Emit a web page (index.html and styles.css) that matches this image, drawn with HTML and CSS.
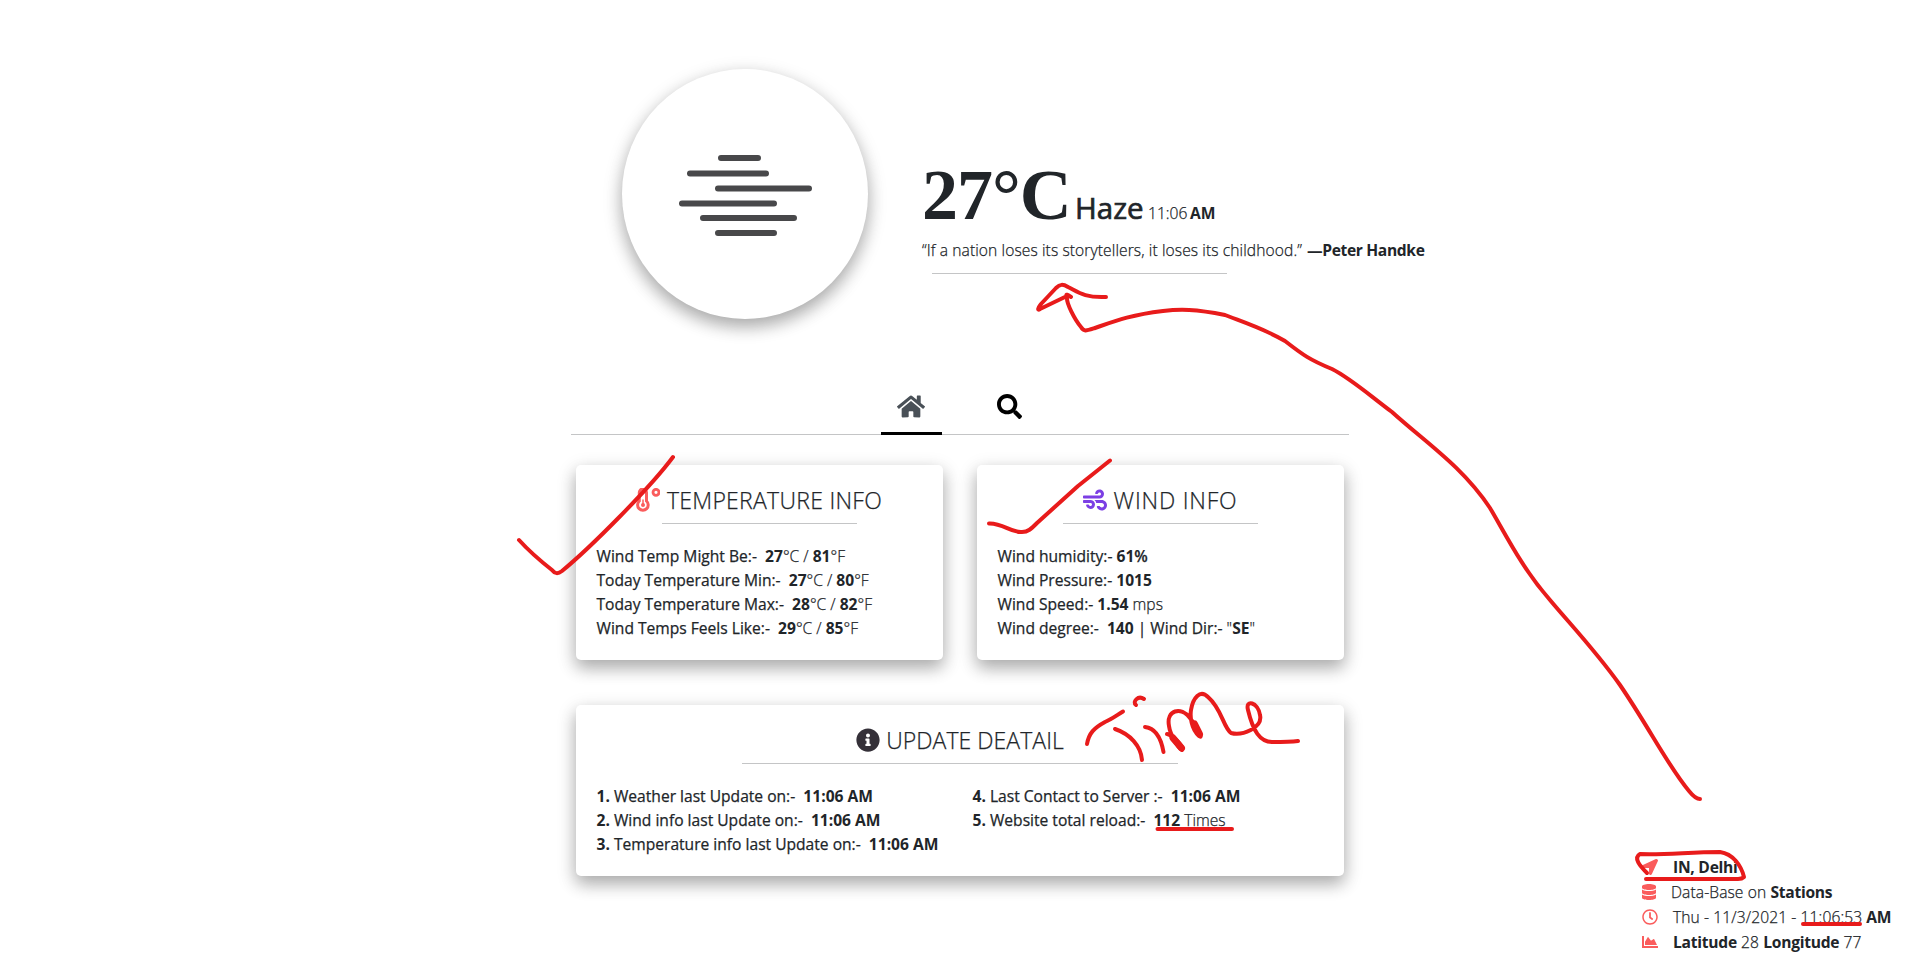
FILE: index.html
```html
<!DOCTYPE html>
<html lang="en">
<head>
<meta charset="utf-8">
<title>Weather</title>
<link rel="stylesheet" href="styles.css">
</head>
<body>
<div class="page">
  <main class="main">
    <header class="hero">
      <div class="disc">
        <svg class="haze" viewBox="0 0 134 84" fill="none" stroke="#48484a" stroke-width="6" stroke-linecap="round">
          <path d="M43 5H80M12 20.500H88M40 35.500H131M4 50.500H96M25 65H116M40 80H96"/>
        </svg>
      </div>
      <div class="now">
        <div class="reading"><span class="degrees">27°C</span><span class="sky">Haze</span><span class="clock">11:06</span><b class="ampm">AM</b></div>
        <p class="quote"><span class="words">“If a nation loses its storytellers, it loses its childhood.”</span><b class="author">—Peter Handke</b></p>
        <hr class="rule rule-quote">
      </div>
    </header>
    <nav class="tabs">
      <a class="tab active"><svg width="28" height="25" viewBox="0 0 576 512" fill="#495057"><path d="M280.37 148.26L96 300.11V464a16 16 0 0 0 16 16l112.06-.29a16 16 0 0 0 15.92-16V368a16 16 0 0 1 16-16h64a16 16 0 0 1 16 16v95.64a16 16 0 0 0 16 16.05L464 480a16 16 0 0 0 16-16V300L295.67 148.26a12.19 12.19 0 0 0-15.3 0zM571.6 251.47L488 182.56V44.05a12 12 0 0 0-12-12h-56a12 12 0 0 0-12 12v72.61L318.47 43a48 48 0 0 0-61 0L4.34 251.47a12 12 0 0 0-1.6 16.9l25.5 31A12 12 0 0 0 45.150 301l235.220-193.740a12.190 12.190 0 0 1 15.300 0L530.900 301a12 12 0 0 0 16.900-1.600l25.500-31a12 12 0 0 0-1.700-16.930z"/></svg></a>
      <a class="tab"><svg width="25" height="25" viewBox="0 0 512 512" fill="#000"><path d="M505 442.700L405.300 343c-4.500-4.500-10.600-7-17-7H372c27.600-35.300 44-79.700 44-128C416 93.100 322.900 0 208 0S0 93.100 0 208s93.100 208 208 208c48.300 0 92.700-16.400 128-44v16.300c0 6.400 2.500 12.500 7 17l99.700 99.700c9.400 9.400 24.600 9.400 33.900 0l28.300-28.300c9.400-9.400 9.400-24.600.1-34zM208 336c-70.700 0-128-57.200-128-128 0-70.700 57.200-128 128-128 70.700 0 128 57.200 128 128 0 70.700-57.200 128-128 128z"/></svg></a>
    </nav>
    <section class="cards">
      <article class="card">
        <h4 class="title"><svg class="ico" viewBox="0 0 24 24" fill="none" stroke="#fa5c5c"><path stroke-width="3" d="M3.300 13V4.500a3.600 3.600 0 0 1 7.200 0V13a5.300 5.300 0 1 1-7.200 0z"/><circle cx="20" cy="4.300" r="3" stroke-width="2.800"/><circle cx="7" cy="17" r="2" fill="#fa5c5c" stroke="none"/><path stroke-width="1.500" d="M7 11.500V17"/></svg><span class="t1">TEMPERATURE INFO</span></h4>
        <hr class="rule">
        <ul class="rows">
          <li><span class="lb">Wind Temp Might Be:-</span>&nbsp; <b>27</b><i>°C / </i><b>81</b><i>°F</i></li>
          <li><span class="lb">Today Temperature Min:-</span>&nbsp; <b>27</b><i>°C / </i><b>80</b><i>°F</i></li>
          <li><span class="lb">Today Temperature Max:-</span>&nbsp; <b>28</b><i>°C / </i><b>82</b><i>°F</i></li>
          <li><span class="lb">Wind Temps Feels Like:-</span>&nbsp; <b>29</b><i>°C / </i><b>85</b><i>°F</i></li>
        </ul>
      </article>
      <article class="card">
        <h4 class="title"><svg class="ico" viewBox="0 0 512 512" fill="#7c3fe4"><path d="M156.700 256H16c-8.800 0-16 7.200-16 16v32c0 8.800 7.200 16 16 16h142.200c15.900 0 30.800 10.900 33.400 26.600 3.300 20-12.100 37.400-31.600 37.400-14.100 0-26.100-9.200-30.400-21.900-2.100-6.300-8.600-10.100-15.200-10.100H81.600c-9.800 0-17.700 8.800-15.900 18.400 8.600 44.100 47.600 77.600 94.200 77.600 57.100 0 102.700-50.100 95.200-108.600C249 291 205.400 256 156.700 256zM16 224h336c59.700 0 106.800-54.800 93.800-116.700-7.600-36.200-36.900-65.500-73.100-73.100-55.400-11.600-105.100 24.900-114.900 75.500-1.900 9.600 6.100 18.300 15.800 18.300h32.800c6.700 0 13.100-3.800 15.200-10.100C325.900 105.200 337.900 96 352 96c19.400 0 34.900 17.400 31.600 37.400-2.600 15.700-17.400 26.600-33.400 26.600H16c-8.800 0-16 7.200-16 16v32c0 8.800 7.200 16 16 16zm384 32H243.700c19.300 16.600 33.200 38.800 39.800 64H400c26.500 0 48 21.500 48 48s-21.500 48-48 48c-17.900 0-33.300-9.900-41.600-24.400-2.900-5-8.700-7.600-14.500-7.600h-33.800c-10.900 0-19 10.800-15.300 21.100 17.800 50.600 70.500 84.800 129.400 72.300 41.200-8.700 75.100-41.600 84.700-82.700C526 321.500 470.500 256 400 256z"/></svg><span class="t2">WIND INFO</span></h4>
        <hr class="rule">
        <ul class="rows">
          <li><span class="lb">Wind humidity:-</span> <b>61</b><span class="lb heavy">%</span></li>
          <li><span class="lb">Wind Pressure:-</span> <b>1015</b></li>
          <li><span class="lb">Wind Speed:-</span> <b>1.54</b> <i>mps</i></li>
          <li><span class="lb">Wind degree:-</span>&nbsp; <b>140</b> <span class="lb">| Wind Dir:-</span> <i>"</i><b>SE</b><i>"</i></li>
        </ul>
      </article>
      <article class="card wide">
        <h4 class="title"><svg class="ico" viewBox="0 0 512 512" fill="#343038"><path d="M256 8C119.043 8 8 119.083 8 256c0 136.997 111.043 248 248 248s248-111.003 248-248C504 119.083 392.957 8 256 8zm0 110c23.196 0 42 18.804 42 42s-18.804 42-42 42-42-18.804-42-42 18.804-42 42-42zm56 254c0 6.627-5.373 12-12 12h-88c-6.627 0-12-5.373-12-12v-24c0-6.627 5.373-12 12-12h12v-64h-12c-6.627 0-12-5.373-12-12v-24c0-6.627 5.373-12 12-12h64c6.627 0 12 5.373 12 12v100h12c6.627 0 12 5.373 12 12v24z"/></svg><span class="t3">UPDATE DEATAIL</span></h4>
        <hr class="rule">
        <div class="split">
          <ul class="rows">
            <li><b>1.</b> <span class="lb">Weather last Update on:-</span>&nbsp; <b>11:06 AM</b></li>
            <li><b>2.</b> <span class="lb">Wind info last Update on:-</span>&nbsp; <b>11:06 AM</b></li>
            <li><b>3.</b> <span class="lb">Temperature info last Update on:-</span>&nbsp; <b>11:06 AM</b></li>
          </ul>
          <ul class="rows">
            <li><b>4.</b> <span class="lb">Last Contact to Server :-</span>&nbsp; <b>11:06 AM</b></li>
            <li><b>5.</b> <span class="lb">Website total reload:-</span>&nbsp; <b>112</b> <i>Times</i></li>
          </ul>
        </div>
      </article>
    </section>
  </main>
  <aside class="station">
    <div class="fact"><svg viewBox="0 0 512 512"><path d="M444.520 3.520L28.740 195.420c-47.970 22.390-31.980 92.750 19.190 92.750h175.910v175.910c0 51.170 70.360 67.170 92.750 19.190l191.900-415.780c15.990-38.390-25.590-79.970-63.970-63.970z"/></svg><span><b>IN, Delhi</b></span></div>
    <div class="fact base"><svg viewBox="0 0 448 512"><path d="M448 73.143v45.714C448 159.143 347.667 192 224 192S0 159.143 0 118.857V73.143C0 32.857 100.333 0 224 0s224 32.857 224 73.143zM448 176v102.857C448 319.143 347.667 352 224 352S0 319.143 0 278.857V176c48.125 33.143 136.208 48.572 224 48.572S399.874 209.143 448 176zm0 160v102.857C448 479.143 347.667 512 224 512S0 479.143 0 438.857V336c48.125 33.143 136.208 48.572 224 48.572S399.874 369.143 448 336z"/></svg><span>Data-Base on <b>Stations</b></span></div>
    <div class="fact"><svg viewBox="0 0 512 512"><path d="M256 8C119 8 8 119 8 256s111 248 248 248 248-111 248-248S393 8 256 8zm0 448c-110.500 0-200-89.500-200-200S145.500 56 256 56s200 89.500 200 200-89.500 200-200 200zm61.800-104.400l-84.900-61.700c-3.100-2.300-4.900-5.900-4.900-9.700V116c0-6.600 5.400-12 12-12h32c6.600 0 12 5.400 12 12v141.700l66.800 48.600c5.400 3.900 6.500 11.400 2.600 16.800L334.600 349c-3.900 5.300-11.400 6.500-16.800 2.600z"/></svg><span>Thu - 11/3/2021 - 11:06:53 <b>AM</b></span></div>
    <div class="fact"><svg viewBox="0 0 512 512"><path d="M500 384c6.600 0 12 5.400 12 12v40c0 6.600-5.400 12-12 12H12c-6.600 0-12-5.400-12-12V76c0-6.600 5.400-12 12-12h40c6.600 0 12 5.400 12 12v308h436zM372.700 159.500L288 216l-85.300-113.700c-5.100-6.800-15.500-6.300-19.900 1L96 248v104h384l-89.900-187.800c-3.200-6.500-11.400-8.700-17.400-4.700z"/></svg><span><b>Latitude</b> 28 <b>Longitude</b> 77</span></div>
  </aside>
  <svg class="ink" viewBox="0 0 1920 970">
    <!-- long arrow from the station list to the quote -->
    <path d="M1700 799C1696 799 1693 796 1689 791C1668 766 1650 729 1620 685C1595 650 1570 624 1550 600C1522 568 1506 535 1490 508C1462 466 1425 442 1392 412C1368 394 1350 378 1332 369C1310 360 1303 355 1285 341C1265 329 1240 321 1225 315C1195 309 1180 309 1163 311C1130 315 1115 321 1095 328C1086 331 1084 332 1081 327C1075 320 1066 303 1067 297C1065 293 1068 295 1071 297M1067 296L1040 309C1037 311 1038 308 1041 304L1056 288C1060 284 1063 284 1068 287C1078 292 1084 298 1106 297"/>
    <path d="M519 540C528 550 538 559 552 570C555 574 558 574 562 571C590 548 650 488 673 457"/>
    <path d="M989 523.500C1003 523 1011 533 1022 532C1028 532 1031 529 1037 523L1078 486L1110 460.500"/>
    <path d="M1087 744C1089 733 1094 728 1105 722C1112 719 1117 715 1123 711.500M1115 729C1130 734 1141 746 1142 760M1136 705C1132 702 1138 695 1144 699M1145 727C1155 728 1161 738 1163.500 752"/>
    <path d="M1167 734C1173 735 1185 748 1182 750C1178 748 1170 734 1169 726C1166 710 1181 706 1190 718C1197 727 1204 740 1199 736C1191 729 1190 716 1191 710C1193 698 1200 689 1208 697C1222 709 1223 727 1231 733C1242 736 1263 728 1260 715C1258 702 1245 699 1248 710C1253 731 1260 742 1272 742C1280 742 1290 742 1298 741"/>
    <path class="thick" d="M1173 738L1181.500 748M1194.500 724L1199.500 734"/>
    <path d="M1157.500 829H1232M1803 924H1860"/>
    <path d="M1647 873C1640 866 1633 858 1640 854C1665 855 1690 852 1720 852C1733 854 1741 865 1744 877Q1742 879 1738 879H1646"/>
  </svg>
</div>
</body>
</html>
```
FILE: styles.css
```css
* { box-sizing: border-box; }
body { margin: 0; background: #fff; color: #212529; font: 300 15.6px/24px "Open Sans", "Noto Sans", sans-serif; -webkit-text-stroke: .25px #212529; overflow: hidden; }
b { font-weight: 700; -webkit-text-stroke: 0; }
i { font-style: normal; }
ul { list-style: none; margin: 0; padding: 0; }

.page { position: relative; display: grid; grid-template-columns: 571px 778px 571px; height: 970px; }
.main { grid-column: 2; padding-top: 69px; }

.hero { display: flex; height: 315px; padding-left: 51px; }
.disc { flex: none; width: 246px; height: 250px; padding-top: 2px; border-radius: 50%; display: flex; align-items: center; justify-content: center; box-shadow: 0 8px 16px rgba(0,0,0,.2), 0 6px 20px rgba(0,0,0,.19); }
.haze { width: 134px; height: 84px; filter: blur(.5px); }
.now { flex: none; padding: 86px 0 0 54px; white-space: nowrap; }
.reading { height: 80px; line-height: 80px; display: flex; align-items: baseline; }
.degrees { font: 700 72px/80px "Liberation Serif", serif; letter-spacing: -1px; width: 153px; -webkit-text-stroke: 0; }
.sky { font-size: 29.5px; font-weight: 400; width: 73px; -webkit-text-stroke: .7px #212529; }
.clock { width: 42px; }
.quote { margin: 3px 0 0; display: flex; }
.words { width: 385px; letter-spacing: .1px; }
.author { letter-spacing: -.35px; }
.rule { height: 1px; border: 0; margin: 0 auto; background: #c4c5c6; }
.rule-quote { width: 295px; margin: 11px 0 0 10px; }

.tabs { height: 51px; display: flex; justify-content: center; gap: 37px; border-bottom: 1px solid #c4c5c6; }
.tab { width: 61px; height: 51px; padding-top: 10px; text-align: center; }
.active { border-bottom: 3px solid #000; }

.cards { display: grid; grid-template-columns: 367px 367px; column-gap: 34px; row-gap: 45px; padding: 30px 5px 0; }
.card { height: 195px; border-radius: 5px; background: #fff; padding: 22px 21px 0 20.5px; box-shadow: 0 8px 16px rgba(0,0,0,.2), 0 6px 20px rgba(0,0,0,.19); }
.wide { grid-column: 1 / 3; height: 171px; }
.title { margin: 0; height: 36px; display: flex; justify-content: center; align-items: center; gap: 6.5px; font-size: 23px; font-weight: 300; line-height: 28px; padding-bottom: 10px; white-space: nowrap; }
.t1 { letter-spacing: .27px; }
.t2 { letter-spacing: .8px; }
.t3 { letter-spacing: .05px; }
.ico { width: 24px; height: 24px; }
.card .rule { width: 60%; }
.rows { padding-top: 20px; white-space: nowrap; }
.lb { font-weight: 400; }
.heavy { font-weight: 600; }
.split { display: grid; grid-template-columns: 376px 1fr; }

.station { align-self: end; padding: 0 0 16px 293px; white-space: nowrap; }
.station b { letter-spacing: -.25px; }
.fact { height: 25px; display: flex; align-items: center; gap: 15px; letter-spacing: .1px; }
.fact svg { width: 16px; height: 16px; fill: #fa5c5c; }
.base svg { width: 14px; }

.ink { position: absolute; left: 0; top: 0; width: 1920px; height: 970px; fill: none; stroke: #e81b1b; stroke-width: 4; stroke-linecap: round; stroke-linejoin: round; }
.thick { stroke-width: 7; }
```
